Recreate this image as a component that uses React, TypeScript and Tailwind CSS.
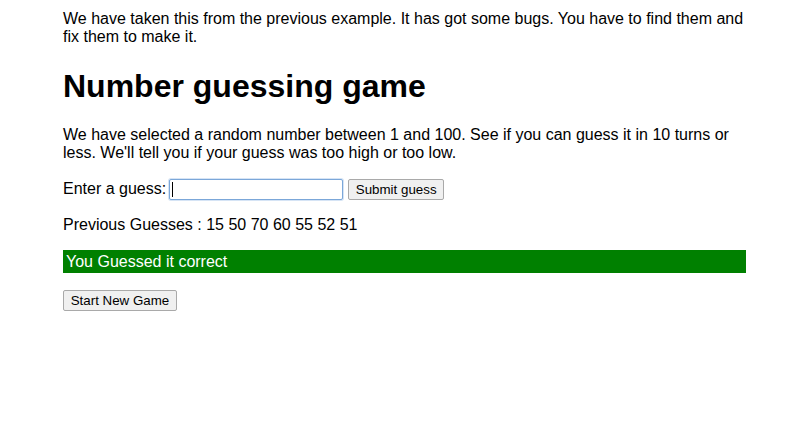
import React from 'react';

const guesses = [15, 50, 70, 60, 55, 52, 51];

export default function App() {
  return (
    <div className="w-[789px] min-h-[446px] bg-white text-black font-['Liberation_Sans',Arial,sans-serif] text-[16px]">
      <div className="ml-[63px] w-[683px] pt-[10px]">
        <p className="leading-[18px]">
          We have taken this from the previous example. It has got some bugs. You have to find them and fix them to make it.
        </p>

        <h1 className="mt-[22px] text-[32px] font-bold leading-[37px]">Number guessing game</h1>

        <p className="mt-[21px] leading-[18px]">
          We have selected a random number between 1 and 100. See if you can guess it in 10 turns or less. We'll tell you if your guess was too high or too low.
        </p>

        {/* Guess form */}
        <div className="mt-[16px] flex items-center h-[22px]">
          <label className="leading-[18px]">Enter a guess:</label>
          <div className="ml-[3px] w-[174px] h-[21px] border border-[#7ba7d9] rounded-[2px] flex items-center bg-white shadow-[0_0_0_1px_#d6e4f5]">
            <span className="ml-[2px] w-px h-[15px] bg-black" />
          </div>
          <button className="ml-[5px] w-[96px] h-[21px] border border-[#a9a9a9] rounded-[2px] bg-[#f0f0f0] text-[13.33px] leading-[15px] text-black">
            Submit guess
          </button>
        </div>

        <p className="mt-[16px] leading-[18px]">Previous Guesses : {guesses.join(' ')}</p>

        <div className="mt-[16px] h-[23px] bg-[#008000] text-white leading-[23px] pl-[3px]">You Guessed it correct</div>

        <button className="mt-[17px] w-[114px] h-[21px] border border-[#a9a9a9] rounded-[2px] bg-[#f0f0f0] text-[13.33px] leading-[15px] text-black block">
          Start New Game
        </button>
      </div>
    </div>
  );
}
